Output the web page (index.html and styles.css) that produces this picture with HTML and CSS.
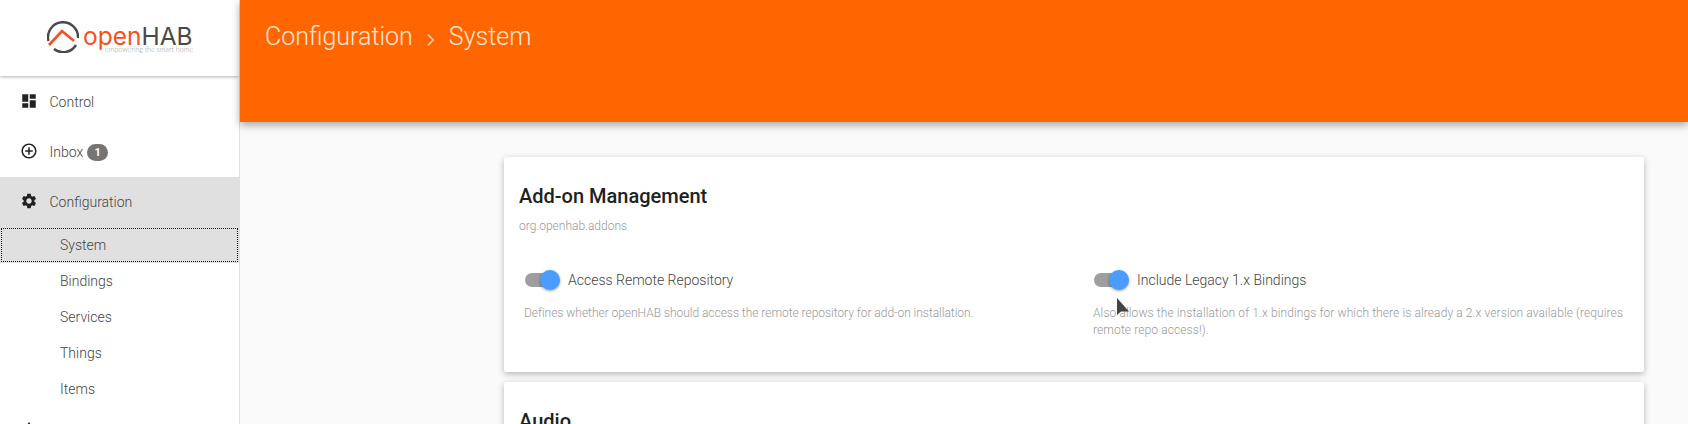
FILE: index.html
```html
<!DOCTYPE html>
<html lang="en">
<head>
<meta charset="utf-8">
<title>openHAB - Configuration</title>
<link rel="stylesheet" href="styles.css">
</head>
<body>
<div class="app">
  <aside class="sidebar">
    <div class="logo-bar">
      <div class="logo">
        <svg class="logo-mark" viewBox="0 0 32 32" width="32" height="32">
          <path d="M1.5 20A15 15 0 1 1 31 17" fill="none" stroke="#4a4a4a" stroke-width="2.4"/>
          <path d="M29 24A15 15 0 0 1 7 28" fill="none" stroke="#4a4a4a" stroke-width="2.4"/>
          <path d="M2 24L15 10 27 20" fill="none" stroke="#f4511e" stroke-width="2.6"/>
        </svg>
        <div class="logo-text">
          <div class="logo-name"><span class="logo-open">open</span><span class="logo-hab">HAB</span></div>
          <div class="logo-tag">empowering the smart home</div>
        </div>
      </div>
    </div>
    <nav class="nav">
      <a class="nav-item">
        <svg class="nav-icon" viewBox="0 0 24 24"><path d="M3 13h8V3H3v10zm0 8h8v-6H3v6zm10 0h8V11h-8v10zm0-18v6h8V3h-8z"/></svg>
        <span>Control</span>
      </a>
      <a class="nav-item">
        <svg class="nav-icon" viewBox="0 0 24 24"><path d="M13 7h-2v4H7v2h4v4h2v-4h4v-2h-4V7zm-1-5C6.48 2 2 6.48 2 12s4.48 10 10 10 10-4.48 10-10S17.52 2 12 2zm0 18c-4.41 0-8-3.59-8-8s3.59-8 8-8 8 3.59 8 8-3.59 8-8 8z"/></svg>
        <span>Inbox</span><span class="badge">1</span>
      </a>
      <a class="nav-item active">
        <svg class="nav-icon" viewBox="0 0 24 24"><path d="M19.14 12.94c.04-.3.06-.61.06-.94 0-.32-.02-.64-.07-.94l2.03-1.58c.18-.14.23-.41.12-.61l-1.92-3.32c-.12-.22-.37-.29-.59-.22l-2.39.96c-.5-.38-1.03-.7-1.62-.94l-.36-2.54c-.04-.24-.24-.41-.48-.41h-3.84c-.24 0-.43.17-.47.41l-.36 2.54c-.59.24-1.13.57-1.62.94l-2.39-.96c-.22-.08-.47 0-.59.22L2.74 8.87c-.12.21-.08.47.12.61l2.03 1.58c-.05.3-.09.63-.09.94s.02.64.07.94l-2.03 1.58c-.18.14-.23.41-.12.61l1.92 3.32c.12.22.37.29.59.22l2.39-.96c.5.38 1.03.7 1.62.94l.36 2.54c.05.24.24.41.48.41h3.84c.24 0 .44-.17.47-.41l.36-2.54c.59-.24 1.13-.56 1.62-.94l2.39.96c.22.08.47 0 .59-.22l1.92-3.32c.12-.22.07-.47-.12-.61l-2.01-1.58zM12 15.6c-1.98 0-3.6-1.62-3.6-3.6s1.62-3.6 3.6-3.6 3.6 1.62 3.6 3.6-1.62 3.6-3.6 3.6z"/></svg>
        <span>Configuration</span>
      </a>
      <a class="sub-item current">System</a>
      <a class="sub-item">Bindings</a>
      <a class="sub-item">Services</a>
      <a class="sub-item">Things</a>
      <a class="sub-item">Items</a>
      <a class="nav-item">
        <svg class="nav-icon" viewBox="0 0 24 24"><path d="M12 0l-6 9h12z"/></svg>
      </a>
    </nav>
  </aside>
  <main class="main">
    <header class="topbar">
      <span>Configuration</span>
      <svg class="crumb" viewBox="0 0 12 12" width="12" height="12"><path d="M3 .8L8.2 6 3 11.2" fill="none" stroke="#ffd9bf" stroke-width="1.5"/></svg>
      <span>System</span>
    </header>
    <section class="content">
      <article class="card">
        <h2 class="card-title">Add-on Management</h2>
        <p class="card-sub">org.openhab.addons</p>
        <div class="options">
          <div class="option">
            <div class="toggle-row">
              <span class="toggle"><span class="thumb"></span></span>
              <span class="toggle-label">Access Remote Repository</span>
            </div>
            <p class="desc">Defines whether openHAB should access the remote repository for add-on installation.</p>
          </div>
          <div class="option">
            <div class="toggle-row">
              <span class="toggle"><span class="thumb"></span></span>
              <span class="toggle-label">Include Legacy 1.x Bindings</span>
            </div>
            <p class="desc desc-wide">Also allows the installation of 1.x bindings for which there is already a 2.x version available (requires remote repo access!).</p>
          </div>
        </div>
      </article>
      <article class="card">
        <h2 class="card-title">Audio</h2>
      </article>
    </section>
  </main>
</div>
<svg class="cursor" viewBox="0 0 14 20" width="14" height="20"><path d="M1 0v17l4-3.5h8z" fill="#444"/></svg>
</body>
</html>
```
FILE: styles.css
```css
* { box-sizing: border-box; }
html, body { margin: 0; height: 424px; overflow: hidden; }
body { font-family: Roboto, "Liberation Sans", sans-serif; font-weight: 300; color: #333; background: #fafafa; position: relative; }
.app { display: flex; height: 424px; overflow: hidden; }

.sidebar { width: 240px; flex: none; background: #fff; border-right: 1px solid #e0e0e0; overflow: hidden; }
.logo-bar { height: 76px; display: flex; align-items: flex-start; padding: 21px 0 0 47px; box-shadow: 0 1px 3px rgba(0,0,0,.3); position: relative; }
.logo { display: flex; gap: 4px; }
.logo-mark { display: block; flex: none; }
.logo-text { margin-top: 4.5px; }
.logo-name { font-family: Inter, sans-serif; font-size: 24.5px; line-height: 20px; }
.logo-open { color: #f4511e; font-weight: 400; }
.logo-hab { color: #4a4a4a; font-weight: 400; }
.logo-tag { font-family: Lato, sans-serif; font-size: 7.1px; line-height: 7px; color: #999; margin-left: 22px; white-space: nowrap; }

.nav { display: flex; flex-direction: column; }
.nav-item { height: 50px; display: flex; align-items: center; padding-left: 20px; font-size: 14px; color: #444; flex: none; }
.nav-item:first-child { height: 51px; }
.nav-icon { width: 18px; height: 18px; margin-right: 11.5px; fill: #222; flex: none; margin-top: -2px; }
.nav-item.active { background: #e0e0e0; }
.badge { width: 21px; height: 17px; border-radius: 9px; background: #757575; color: #fff; font-size: 11px; font-weight: 700; display: flex; align-items: center; justify-content: center; margin-left: 4px; margin-top: 1px; }
.sub-item { height: 36px; display: flex; align-items: center; padding-left: 60px; font-size: 14px; color: #444; flex: none; }
.sub-item.current { background: #e0e0e0; outline: 1px dotted #111; outline-offset: -2px; }

.main { flex: 1; min-width: 0; display: flex; flex-direction: column; }
.topbar { height: 122px; flex: none; background: #ff6600; color: #ffe6d6; font-size: 25px; display: flex; align-items: flex-start; padding: 22px 0 0 25px; box-shadow: 0 3px 8px rgba(0,0,0,.35); position: relative; }
.crumb { margin: 12px 12px 0 12px; }

.content { padding: 35px 44px 0 264px; display: flex; flex-direction: column; gap: 10px; }
.card { background: #fff; border-radius: 2px; box-shadow: 0 2px 6px rgba(0,0,0,.28); padding: 27px 15px 0; flex: none; }
.card:first-child { height: 215px; }
.card-title { margin: 0; font-size: 20px; line-height: 24px; font-weight: 500; color: #212121; }
.card-sub { margin: 10px 0 0; font-size: 12px; line-height: 16px; color: #999; }
.options { display: grid; grid-template-columns: 569px 1fr; margin-top: 34px; }
.option { padding-left: 5px; }
.toggle-row { display: flex; align-items: center; height: 24px; padding-left: 1px; }
.toggle { width: 30px; height: 14px; background: #9e9e9e; border-radius: 7px; position: relative; flex: none; margin-right: 13px; }
.thumb { position: absolute; left: 15px; top: -3px; width: 20px; height: 20px; border-radius: 50%; background: #4a9dff; box-shadow: 0 1px 3px rgba(0,0,0,.4); }
.toggle-label { font-size: 14px; color: #444; }
.desc { margin: 13px 0 0; font-size: 12px; line-height: 17px; color: #999; letter-spacing: -.03px; }
.desc-wide { letter-spacing: .1px; }

.cursor { position: absolute; left: 1116px; top: 298px; }
```
